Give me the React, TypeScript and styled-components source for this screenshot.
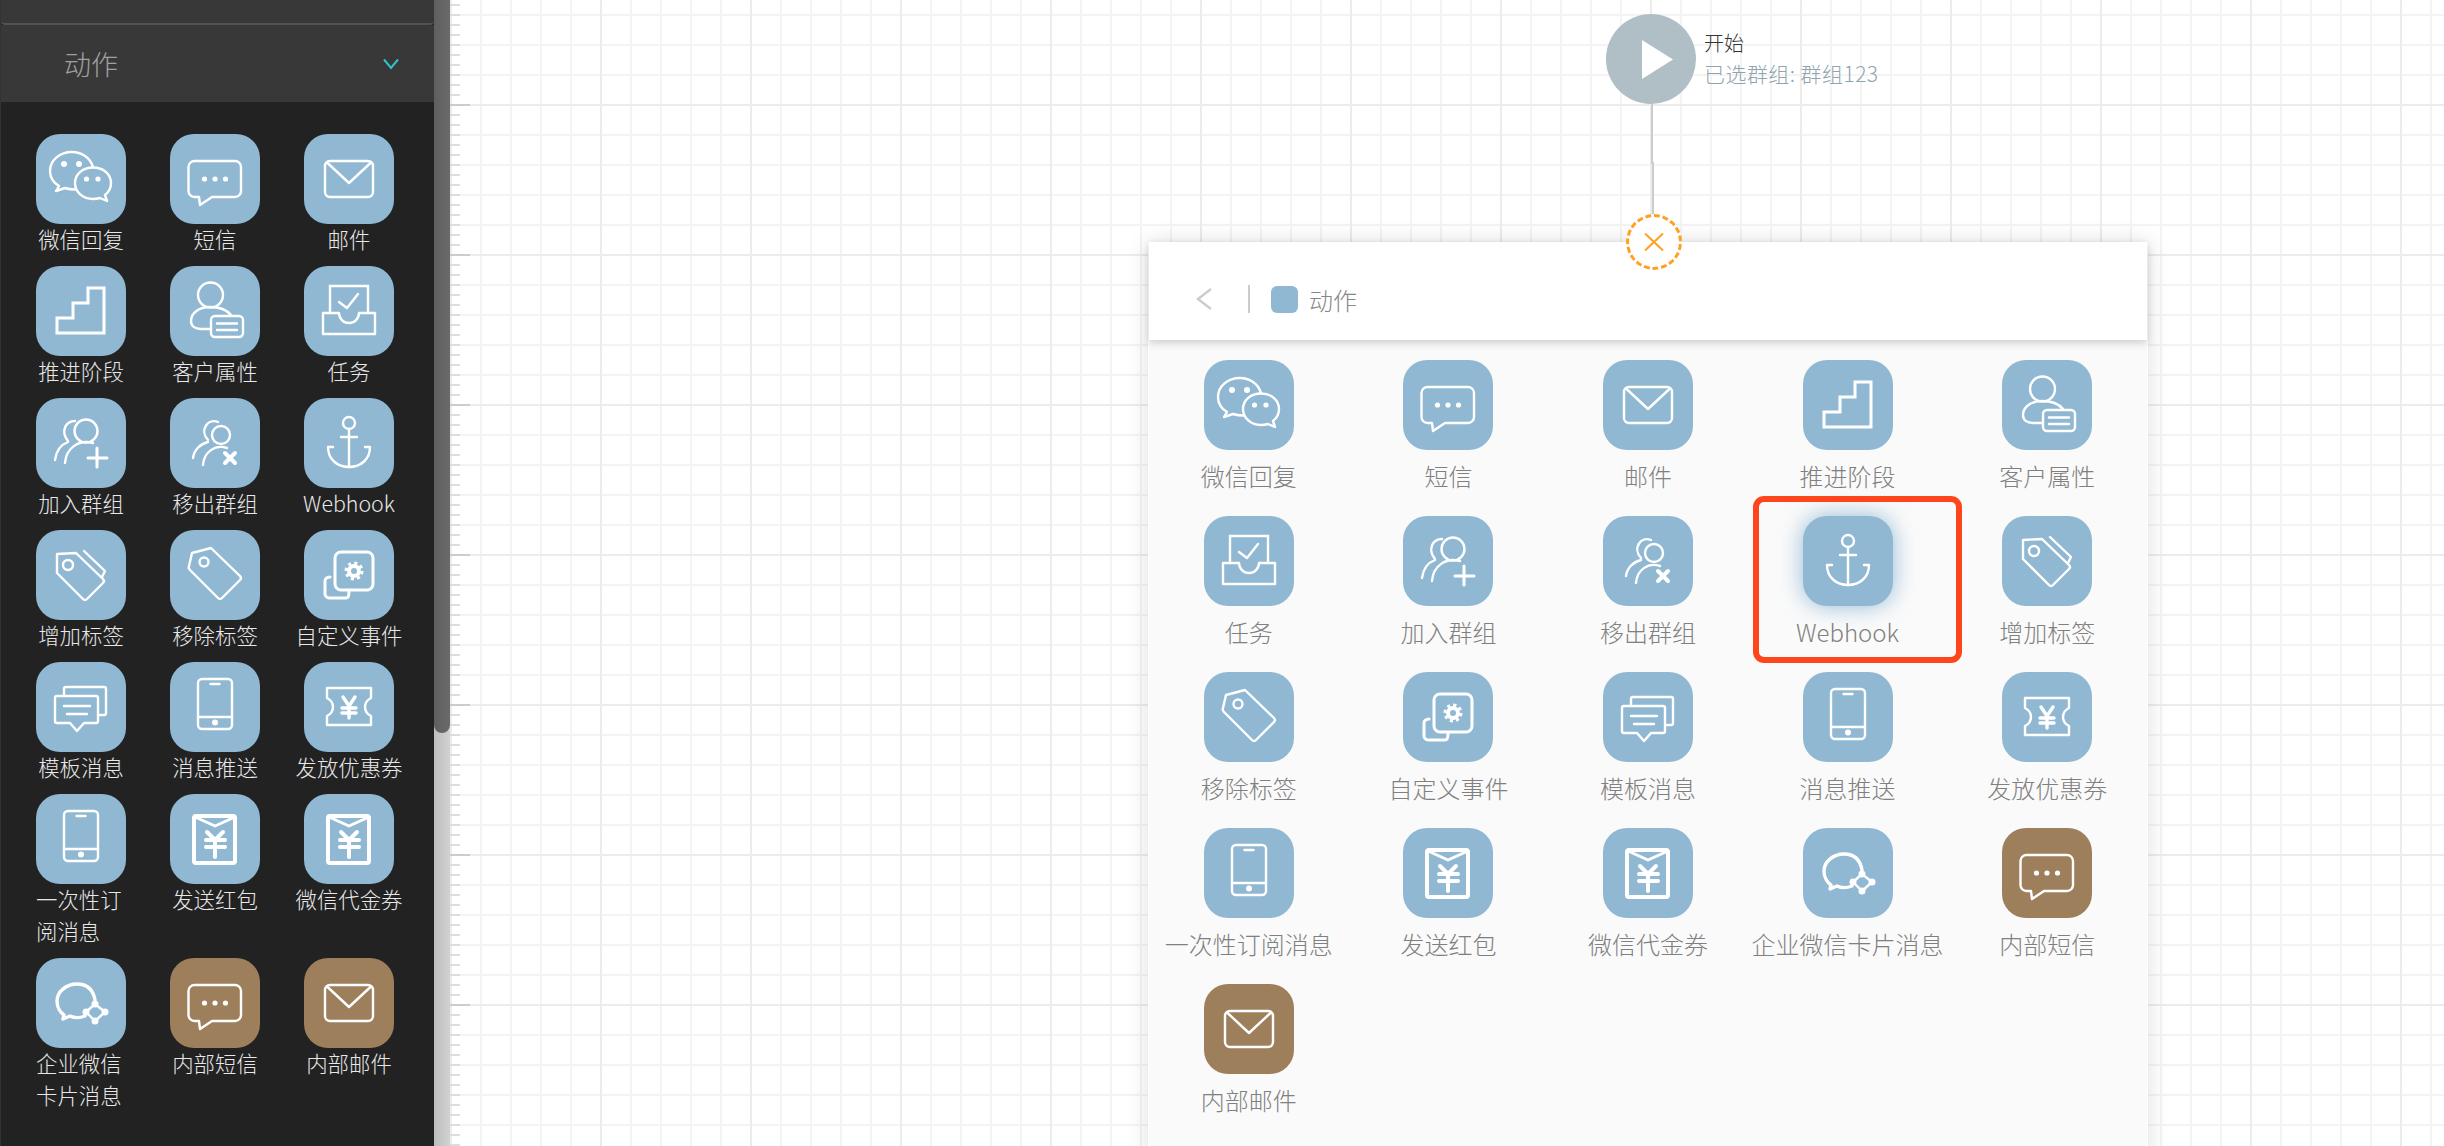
import type { ReactNode } from 'react'
import styled, { createGlobalStyle } from 'styled-components'

const FONT = '"Noto Sans CJK SC", "Noto Sans", sans-serif'

const GlobalStyle = createGlobalStyle`
  html, body {
    margin: 0;
    height: 100%;
    overflow: hidden;
    background: #fff;
    font-family: ${FONT};
    font-weight: 300;
  }
  * { box-sizing: border-box; }
`

const Page = styled.div`
  display: flex;
  width: 100vw;
  height: 100vh;
  overflow: hidden;
`

const Sidebar = styled.aside`
  display: flex;
  flex: 0 0 450px;
  height: 100%;
`

const SidePane = styled.div`
  flex: 1;
  display: flex;
  flex-direction: column;
  background: #222;
  border-left: 1px solid #333;
`

const CollapsedSection = styled.div`
  height: 25px;
  background: #383838;
  border-bottom: 2px solid #515151;
  border-radius: 0 0 4px 4px;
`

const SectionHeader = styled.div`
  display: flex;
  align-items: center;
  justify-content: space-between;
  height: 77px;
  padding: 0 35px 0 63px;
  background: #383838;
  color: #a0a0a0;
  font-size: 27px;
`

const SideGrid = styled.div`
  display: grid;
  grid-template-columns: repeat(3, 134px);
  align-items: start;
  row-gap: 10px;
  padding: 32px 0 0 13px;
`

const ScrollTrack = styled.div`
  flex: 0 0 16px;
  background: linear-gradient(to right, #bdbdbd, #d2d2d2);
`

const ScrollThumb = styled.div`
  height: 733px;
  background: linear-gradient(to right, #5f5f5f, #6a6a6a);
  border-radius: 0 0 8px 8px;
`

const SideItem = styled.div`
  display: flex;
  flex-direction: column;
  align-items: center;
`

const SideLabel = styled.div<{ $wrap?: boolean }>`
  margin: -1px 0 1px;
  color: #e8e8e8;
  font-size: 21.4px;
  line-height: 32px;
  white-space: ${({ $wrap }) => ($wrap ? 'normal' : 'nowrap')};
  width: ${({ $wrap }) => ($wrap ? '90px' : 'auto')};
  text-align: ${({ $wrap }) => ($wrap ? 'left' : 'center')};
`

const Tile = styled.div<{ $tone: 'blue' | 'brown'; $glow?: boolean }>`
  flex: 0 0 90px;
  width: 90px;
  height: 90px;
  border-radius: 24px;
  background: ${({ $tone }) => ($tone === 'blue' ? '#90b8d3' : '#9e7f5c')};
  box-shadow: ${({ $glow }) => ($glow ? '0 0 22px rgba(90, 150, 195, 0.65)' : 'none')};

  svg {
    display: block;
    width: 90px;
    height: 90px;
    fill: none;
    stroke: #fff;
    stroke-width: 2.4;
    stroke-linejoin: round;
    stroke-linecap: round;
  }
`

const Canvas = styled.main`
  position: relative;
  flex: 1;
  height: 100%;
  overflow: hidden;
  background-color: #fff;
  background-image:
    linear-gradient(to bottom, #ccc 2px, transparent 2px),
    linear-gradient(to bottom, #ddd 2px, transparent 2px),
    linear-gradient(to bottom, #ececec 2px, transparent 2px),
    linear-gradient(to right, #ececec 2px, transparent 2px),
    linear-gradient(to bottom, #f4f4f4 2px, transparent 2px),
    linear-gradient(to right, #f4f4f4 2px, transparent 2px);
  background-size:
    20px 150px,
    10px 10px,
    100% 150px,
    150px 100%,
    100% 30px,
    30px 100%;
  background-repeat: repeat-y, repeat-y, repeat, repeat, repeat, repeat;
  background-position:
    0 104px,
    0 4px,
    0 104px,
    0 0,
    0 14px,
    0 0;
`

const StartNode = styled.div`
  position: absolute;
  left: 1156px;
  top: 14px;
  display: flex;
  gap: 8px;
`

const StartCircle = styled.div`
  display: flex;
  align-items: center;
  justify-content: center;
  width: 90px;
  height: 90px;
  padding-left: 12px;
  border-radius: 50%;
  background: #b0bec5;
`

const StartText = styled.div`
  padding-top: 13px;
  line-height: 31px;
  white-space: nowrap;
`

const StartTitle = styled.div`
  color: #333;
  font-size: 20px;
`

const StartSub = styled.div`
  color: #90a4ae;
  font-size: 21px;
  letter-spacing: 0.45px;
`

const Connector = styled.svg`
  position: absolute;
  left: 1201px;
  top: 104px;
`

const CloseNode = styled.div`
  position: absolute;
  z-index: 2;
  left: 1176px;
  top: 214px;
  display: flex;
  align-items: center;
  justify-content: center;
  width: 56px;
  height: 56px;
  border: 3px dashed #ffa01e;
  border-radius: 50%;
  background: #fff;
`

const Panel = styled.section`
  position: absolute;
  left: 698px;
  top: 242px;
  bottom: -30px;
  width: 1000px;
  display: flex;
  flex-direction: column;
  padding: 0 1px;
  background: #fff;
  box-shadow: 0 0 22px rgba(0, 0, 0, 0.13);
`

const PanelHeader = styled.header`
  position: relative;
  z-index: 1;
  display: flex;
  align-items: center;
  flex: 0 0 98px;
  padding: 16px 0 0 47px;
  background: #fff;
  box-shadow: 0 3px 8px rgba(0, 0, 0, 0.18);
`

const HeaderDivider = styled.div`
  width: 2px;
  height: 28px;
  margin: 0 21px 0 36px;
  background: #ccc;
`

const HeaderSwatch = styled.div`
  width: 27px;
  height: 27px;
  margin-right: 11px;
  border-radius: 6px;
  background: #90b8d3;
`

const HeaderTitle = styled.div`
  color: #888;
  font-size: 24px;
`

const PanelBody = styled.div`
  flex: 1;
  display: grid;
  grid-template-columns: repeat(5, 1fr);
  grid-auto-rows: 156px;
  align-content: start;
  padding-top: 20px;
  background: #fafafa;
`

const PanelItem = styled.div`
  position: relative;
  display: flex;
  flex-direction: column;
  align-items: center;
`

const PanelLabel = styled.div`
  margin-top: 11px;
  color: #808080;
  font-size: 24px;
  line-height: 30px;
  white-space: nowrap;
`

const Highlight = styled.div`
  position: absolute;
  left: 5px;
  top: -20px;
  width: 209px;
  height: 167px;
  border: 6px solid #ff451c;
  border-radius: 11px;
`

const Wechat = () => (
  <svg viewBox="0 0 90 90">
    <path d="M57 33C54 23 45 18 36 18C24 18 14 26 14 37C14 44 18 49 23 52L20 57L29 54C32 55 35 55.5 39 55.5" />
    <path d="M57 33.5C47 33.5 39 40 39 49C39 58 47 65 57 65C60 65 62 64.5 64 64L71 67L69 61C73 58 75 54 75 49C75 40 67 33.5 57 33.5Z" />
    <g fill="#fff" stroke="none">
      <circle cx="28" cy="30" r="3" />
      <circle cx="43" cy="30" r="3" />
      <circle cx="50.5" cy="45" r="2.6" />
      <circle cx="62" cy="45" r="2.6" />
    </g>
  </svg>
)

const Sms = () => (
  <svg viewBox="0 0 90 90">
    <path d="M24.5 27H65a6 6 0 0 1 6 6V57a6 6 0 0 1-6 6H42L30 71L29 63H24.5a6 6 0 0 1-6-6V33a6 6 0 0 1 6-6Z" />
    <g fill="#fff" stroke="none">
      <circle cx="34.5" cy="45" r="2.6" />
      <circle cx="45" cy="45" r="2.6" />
      <circle cx="55.5" cy="45" r="2.6" />
    </g>
  </svg>
)

const Mail = () => (
  <svg viewBox="0 0 90 90">
    <rect x="21" y="27" width="48" height="36" rx="5" />
    <path d="M23 28.5L45 49L67 28.5" />
  </svg>
)

const Stairs = () => (
  <svg viewBox="0 0 90 90">
    <path strokeLinejoin="miter" strokeWidth="3" d="M21 67V52H37V37H52V22H68V67Z" />
  </svg>
)

const Customer = () => (
  <svg viewBox="0 0 90 90">
    <circle cx="40.5" cy="29" r="12.5" />
    <path d="M61 49C57 44 50 41 40 41C29 41 21 47 21 55C21 60 25 63 31 63H41" />
    <rect x="41" y="50" width="32" height="21" rx="4" />
    <path d="M47 57.5H67M47 64H67" />
  </svg>
)

const Task = () => (
  <svg viewBox="0 0 90 90">
    <path strokeLinejoin="miter" d="M26 47V20H64V47" />
    <path d="M35 36L43 42L54 28" />
    <path d="M19 47H35A10 10 0 0 0 55 47H71V68H19Z" />
  </svg>
)

const GroupAdd = () => (
  <svg viewBox="0 0 90 90">
    <circle cx="50" cy="33" r="11.5" />
    <path d="M39 23C30 23 24 33 32 43" />
    <path d="M57 45C43 41 30 50 29 65" />
    <path d="M32 44C24 47 20 54 19 62" />
    <path d="M52 60H71M61 50V69" strokeWidth="3" />
  </svg>
)

const GroupRemove = () => (
  <svg viewBox="0 0 90 90">
    <circle cx="51" cy="37" r="9" />
    <path d="M48 24C38 20 29 32 38 42" />
    <path d="M57 50C45 46 34 54 33 67" />
    <path d="M38 44C30 46 24 52 23 60" />
    <path d="M55 55L65 65M65 55L55 65" strokeWidth="4" />
  </svg>
)

const Anchor = () => (
  <svg viewBox="0 0 90 90">
    <circle cx="45" cy="25" r="6" />
    <path d="M45 31V69M37 39H53" />
    <path d="M29 49H24C24 61 33 69 45 69C57 69 66 61 66 49H61" />
  </svg>
)

const TagAdd = () => (
  <svg viewBox="0 0 90 90">
    <path d="M21 24L40 23L67 49Q69 51 67 53L51 69Q49 71 47 69L21 43Z" />
    <circle cx="32" cy="35" r="5" />
    <path d="M48 21L69 41L66 47" />
  </svg>
)

const TagRemove = () => (
  <svg viewBox="0 0 90 90">
    <path d="M22 23L41 18L70 46Q72 48 70 50L52 68Q50 70 48 68L20 40Q18 38 19 36Z" />
    <circle cx="34" cy="32" r="4.5" />
  </svg>
)

const CustomEvent = () => (
  <svg viewBox="0 0 90 90">
    <rect x="31" y="22" width="38" height="38" rx="6" strokeWidth="3" />
    <path d="M26 47C23 47 21 49 21 51V64C21 66 23 68 25 68H42C44 68 45 66 45 62" strokeWidth="3" />
    <circle cx="50" cy="41" r="5" strokeWidth="4" />
    <circle cx="50" cy="41" r="8" strokeWidth="3" strokeDasharray="3.14 3.14" strokeLinecap="butt" />
  </svg>
)

const Template = () => (
  <svg viewBox="0 0 90 90">
    <path d="M28 33V27a2 2 0 0 1 2-2H68a2 2 0 0 1 2 2V51a2 2 0 0 1-2 2H64" />
    <path d="M21 34H60a2 2 0 0 1 2 2V59a2 2 0 0 1-2 2H48L41 69L34 61H21a2 2 0 0 1-2-2V36a2 2 0 0 1 2-2Z" />
    <path d="M28 44H54M31 52H51" />
  </svg>
)

const Phone = () => (
  <svg viewBox="0 0 90 90">
    <rect x="28" y="17" width="34" height="50" rx="4" />
    <path d="M40.5 22H49.5M28 55H62" />
    <circle cx="45" cy="60.5" r="3" fill="#fff" stroke="none" />
  </svg>
)

const Coupon = () => (
  <svg viewBox="0 0 90 90">
    <path d="M23 26H67V36C63 38 61 41 61 45C61 49 63 52 67 54V63H23V54C27 52 29 49 29 45C29 41 27 38 23 36Z" />
    <path strokeWidth="3.4" d="M39 35L45 44L51 35M38 46H52M38 51H52M45 44V56" />
  </svg>
)

const RedPacket = () => (
  <svg viewBox="0 0 90 90">
    <rect x="24" y="22" width="41" height="47" rx="2" strokeWidth="4" />
    <path strokeWidth="3" d="M25 23L45 32L65 23" />
    <path strokeWidth="4" d="M37 38L45 46L53 38M36 46H55M36 53H55M45 46V63" />
  </svg>
)

const WorkWechat = () => (
  <svg viewBox="0 0 90 90">
    <path strokeWidth="3.4" d="M59 42C57 31 50 26 41 26C30 26 21 34 21 43C21 50 25 55 28 57L27 61L34 58C38 60 44 60 49 58" />
    <path strokeWidth="2.4" d="M59 46L69 54L59 63L50 54Z" />
    <g fill="#fff" stroke="none">
      <circle cx="59" cy="46" r="3.5" />
      <circle cx="69" cy="54" r="3.5" />
      <circle cx="59" cy="63" r="3.5" />
      <circle cx="50" cy="54" r="3.5" />
    </g>
  </svg>
)

type Action = { name: string; icon: ReactNode; tone?: 'brown'; wrap?: boolean }

const actions: Action[] = [
  { name: '微信回复', icon: <Wechat /> },
  { name: '短信', icon: <Sms /> },
  { name: '邮件', icon: <Mail /> },
  { name: '推进阶段', icon: <Stairs /> },
  { name: '客户属性', icon: <Customer /> },
  { name: '任务', icon: <Task /> },
  { name: '加入群组', icon: <GroupAdd /> },
  { name: '移出群组', icon: <GroupRemove /> },
  { name: 'Webhook', icon: <Anchor /> },
  { name: '增加标签', icon: <TagAdd /> },
  { name: '移除标签', icon: <TagRemove /> },
  { name: '自定义事件', icon: <CustomEvent /> },
  { name: '模板消息', icon: <Template /> },
  { name: '消息推送', icon: <Phone /> },
  { name: '发放优惠券', icon: <Coupon /> },
  { name: '一次性订阅消息', icon: <Phone />, wrap: true },
  { name: '发送红包', icon: <RedPacket /> },
  { name: '微信代金券', icon: <RedPacket /> },
  { name: '企业微信卡片消息', icon: <WorkWechat />, wrap: true },
  { name: '内部短信', icon: <Sms />, tone: 'brown' },
  { name: '内部邮件', icon: <Mail />, tone: 'brown' },
]

export default function App() {
  return (
    <Page>
      <GlobalStyle />
      <Sidebar>
        <SidePane>
          <CollapsedSection />
          <SectionHeader>
            动作
            <svg width="16" height="12" viewBox="0 0 16 12" fill="none" stroke="#2fc4cc" strokeWidth="2">
              <path d="M1 1.5L8 10L15 1.5" />
            </svg>
          </SectionHeader>
          <SideGrid>
            {actions.map((action) => (
              <SideItem key={action.name}>
                <Tile $tone={action.tone ?? 'blue'}>{action.icon}</Tile>
                <SideLabel $wrap={action.wrap}>{action.name}</SideLabel>
              </SideItem>
            ))}
          </SideGrid>
        </SidePane>
        <ScrollTrack>
          <ScrollThumb />
        </ScrollTrack>
      </Sidebar>

      <Canvas>
        <StartNode>
          <StartCircle>
            <svg width="31" height="39" viewBox="0 0 31 39">
              <path d="M0 0L31 19.5L0 39Z" fill="#fff" />
            </svg>
          </StartCircle>
          <StartText>
            <StartTitle>开始</StartTitle>
            <StartSub>已选群组: 群组123</StartSub>
          </StartText>
        </StartNode>
        <Connector width="4" height="112" viewBox="0 0 4 112" fill="none" stroke="#ccc" strokeWidth="2">
          <path d="M1 0V59H2V112" />
        </Connector>
        <CloseNode>
          <svg width="20" height="18" viewBox="0 0 20 18" fill="none" stroke="#ffa01e" strokeWidth="2">
            <path d="M1 0.5L19 17.5M19 0.5L1 17.5" />
          </svg>
        </CloseNode>

        <Panel>
          <PanelHeader>
            <svg width="16" height="22" viewBox="0 0 16 22" fill="none" stroke="#ccc" strokeWidth="2.4">
              <path d="M15 1L2 11L15 21" />
            </svg>
            <HeaderDivider />
            <HeaderSwatch />
            <HeaderTitle>动作</HeaderTitle>
          </PanelHeader>
          <PanelBody>
            {actions.map((action) => (
              <PanelItem key={action.name}>
                <Tile $tone={action.tone ?? 'blue'} $glow={action.name === 'Webhook'}>
                  {action.icon}
                </Tile>
                <PanelLabel>{action.name}</PanelLabel>
                {action.name === 'Webhook' && <Highlight />}
              </PanelItem>
            ))}
          </PanelBody>
        </Panel>
      </Canvas>
    </Page>
  )
}
